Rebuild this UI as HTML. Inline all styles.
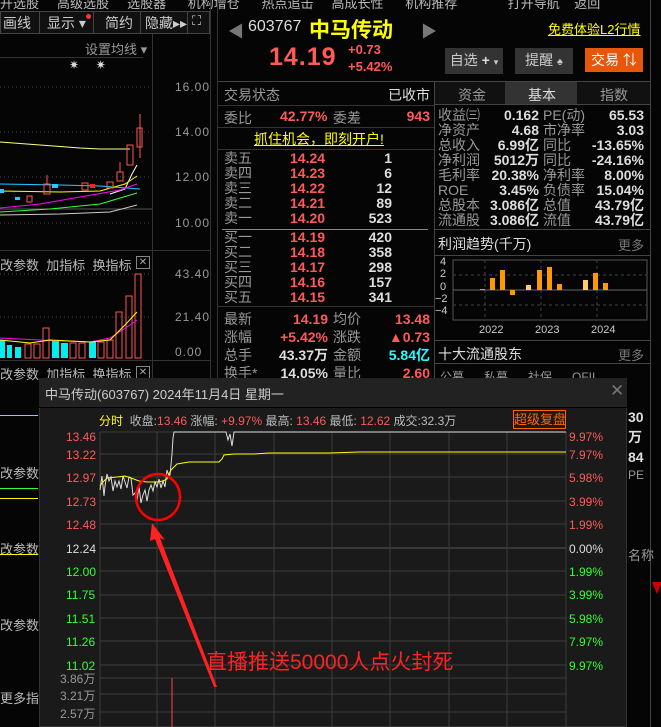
<!DOCTYPE html>
<html><head><meta charset="utf-8"><style>
*{margin:0;padding:0;box-sizing:border-box}
body{width:661px;height:727px;background:#050505;overflow:hidden;position:relative;font-family:"Liberation Sans","Noto Sans CJK SC",sans-serif;font-size:13px;color:#ccc}
.a{position:absolute;white-space:nowrap}
.r{color:#ff5a5a}.g{color:#3f3}.w{color:#ddd}.gy{color:#999}.y{color:#ff0}.c{color:#2ff}
.m{font-family:"Liberation Sans","Noto Sans CJK SC",sans-serif}
.hl{position:absolute;height:1px;background:#333}
.vl{position:absolute;width:1px;background:#333}
.btn{position:absolute;background:#333;color:#ccc;font-size:14px;text-align:center;line-height:24px}
</style></head><body>
<div class="a gy" style="left:0;top:-7px;font-size:13px;color:#bbb">开选股 &nbsp;&nbsp;&nbsp;&nbsp;高级选股 &nbsp;&nbsp;&nbsp;&nbsp;选股器 &nbsp;&nbsp;&nbsp;&nbsp;&nbsp;机构增仓 &nbsp;&nbsp;&nbsp;&nbsp;&nbsp;热点追击 &nbsp;&nbsp;&nbsp;&nbsp;高成长性 &nbsp;&nbsp;&nbsp;&nbsp;&nbsp;机构推荐 &nbsp;&nbsp;&nbsp;&nbsp;&nbsp;&nbsp;&nbsp;&nbsp;&nbsp;&nbsp;&nbsp;&nbsp;&nbsp;打开导航 &nbsp;&nbsp;&nbsp;返回</div>
<div class="a" style="left:0;top:11px;width:210px;height:23px;border:1px solid #444;background:#111"></div>
<div class="a" style="left:3px;top:13px;font-size:14px;color:#ccc">画线</div>
<div class="vl" style="left:39px;top:11px;height:23px;background:#444"></div>
<div class="a" style="left:47px;top:13px;font-size:14px">显示 ▾</div><div class="a" style="left:86px;top:14px;width:5px;height:5px;border-radius:3px;background:#f33"></div>
<div class="vl" style="left:93px;top:11px;height:23px;background:#444"></div>
<div class="a" style="left:105px;top:13px;font-size:14px">简约</div>
<div class="vl" style="left:140px;top:11px;height:23px;background:#444"></div>
<div class="a" style="left:145px;top:13px;font-size:14px">隐藏▸▸</div>
<div class="vl" style="left:187px;top:11px;height:23px;background:#444"></div>
<div class="a" style="left:192px;top:13px;font-size:13px">⛶</div>
<div class="vl" style="left:152px;top:34px;height:360px;background:#333"></div>
<div class="vl" style="left:210px;top:0;height:380px;background:#333"></div>
<div class="vl" style="left:217px;top:0;height:380px;background:#333"></div>
<div class="a gy" style="left:85px;top:39px;font-size:13px">设置均线 ▾</div>
<div class="hl" style="left:0;top:57px;width:143px"></div>
<div class="a w" style="left:69px;top:58px;font-size:12px">✷ &nbsp;&nbsp;&nbsp;&nbsp;✷</div>
<div class="a gy" style="left:175px;top:80px;font-size:12px;letter-spacing:1px">16.00</div>
<div class="a gy" style="left:175px;top:125px;font-size:12px;letter-spacing:1px">14.00</div>
<div class="a gy" style="left:175px;top:170px;font-size:12px;letter-spacing:1px">12.00</div>
<div class="a gy" style="left:175px;top:216px;font-size:12px;letter-spacing:1px">10.00</div>
<svg class="a" style="left:0;top:34px" width="152" height="220">
<g stroke="#444" stroke-dasharray="1,3"><line x1="0" y1="53" x2="150" y2="53"/><line x1="0" y1="98" x2="150" y2="98"/><line x1="0" y1="143" x2="150" y2="143"/><line x1="0" y1="189" x2="150" y2="189"/></g>
<line x1="0" y1="175" x2="152" y2="175" stroke="#555"/>
<polyline fill="none" stroke="#ff8" stroke-width="1" points="0,108 40,111 80,114 100,115 130,115"/>
<polyline fill="none" stroke="#2cf" points="0,150 60,151 100,152 140,155"/>
<polyline fill="none" stroke="#fff" points="110,160 125,155 132,140 137,131"/>
<polyline fill="none" stroke="#ff0" points="0,157 60,158 100,157 125,150 137,142"/>
<polyline fill="none" stroke="#f0f" points="0,174 40,170 80,163 120,156 137,150"/>
<polyline fill="none" stroke="#3f3" points="0,178 50,175 100,170 137,159"/>
<polyline fill="none" stroke="#ccc" points="0,181 60,180 110,178 137,171"/>
<g fill="none" stroke="#f55"><rect x="27" y="162" width="5" height="6"/><rect x="44" y="150" width="6" height="10"/><rect x="82" y="149" width="6" height="7"/><rect x="107" y="148" width="6" height="6"/><rect x="117" y="138" width="6" height="9"/><rect x="127" y="111" width="6" height="20"/><rect x="137" y="94" width="5" height="19"/><line x1="140" y1="80" x2="140" y2="124"/><line x1="120" y1="128" x2="120" y2="138"/><line x1="47" y1="141" x2="47" y2="150"/></g>
<rect x="90" y="150" width="5" height="4" fill="#f22"/>
<g fill="#2cf"><rect x="0" y="155" width="4" height="4"/><rect x="15" y="163" width="5" height="3"/><rect x="52" y="150" width="6" height="4"/></g>
</svg>
<div class="hl" style="left:0;top:250px;width:210px"></div>
<div class="a" style="left:0;top:255px;font-size:13px;color:#bbb">改参数 &nbsp;加指标 &nbsp;换指标</div>
<div class="a" style="left:136px;top:256px;width:14px;height:13px;border:1px solid #888;color:#aaa;font-size:10px;line-height:11px;text-align:center">✕</div>
<div class="a gy" style="left:175px;top:267px;font-size:12px;letter-spacing:1px">43.40</div>
<div class="a gy" style="left:175px;top:310px;font-size:12px;letter-spacing:1px">21.40</div>
<div class="a gy" style="left:175px;top:345px;font-size:12px;letter-spacing:1px">0.00</div>
<svg class="a" style="left:0;top:270px" width="152" height="92">
<g stroke="#444" stroke-dasharray="1,3"><line x1="0" y1="4" x2="150" y2="4"/><line x1="0" y1="47" x2="150" y2="47"/></g>
<g fill="#0ee"><rect x="0" y="70" width="5" height="18"/><rect x="7" y="75" width="5" height="13"/><rect x="15" y="77" width="6" height="11"/><rect x="52" y="70" width="7" height="18"/><rect x="61" y="73" width="7" height="15"/><rect x="89" y="72" width="7" height="16"/></g>
<g fill="none" stroke="#f55"><rect x="25" y="74" width="6" height="14"/><rect x="34" y="74" width="6" height="14"/><rect x="43" y="58" width="6" height="30"/><rect x="70" y="73" width="6" height="15"/><rect x="79" y="73" width="6" height="15"/><rect x="98" y="72" width="6" height="16"/><rect x="107" y="70" width="6" height="18"/><rect x="116" y="42" width="6" height="46"/><rect x="126" y="26" width="6" height="62"/><rect x="135" y="4" width="6" height="84"/></g>
<polyline fill="none" stroke="#f0f" points="0,68 40,70 90,72 110,68 130,55 137,50"/>
<polyline fill="none" stroke="#ff0" points="0,70 30,73 50,70 90,72 110,70 125,55 137,42"/>
</svg>
<div class="hl" style="left:0;top:360px;width:210px"></div>
<div class="a" style="left:0;top:364px;font-size:13px;color:#bbb">改参数 &nbsp;加指标 &nbsp;换指标</div>
<div class="a" style="left:136px;top:366px;width:14px;height:13px;border:1px solid #888;color:#aaa;font-size:10px;line-height:11px;text-align:center">✕</div>

<div class="a" style="left:228px;top:18px;color:#777;font-size:16px">◀</div>
<div class="a" style="left:248px;top:18px;font-size:16px;color:#ddd">603767</div>
<div class="a y" style="left:309px;top:14px;font-size:21px;font-weight:bold">中马传动</div>
<div class="a" style="left:421px;top:18px;color:#777;font-size:16px">▶</div>
<div class="a y" style="left:548px;top:19px;font-size:13px;text-decoration:underline">免费体验L2行情</div>
<div class="a r" style="left:269px;top:43px;font-size:25px;font-weight:bold;letter-spacing:1px">14.19</div>
<div class="a r" style="left:348px;top:42px;font-size:13px;font-weight:bold">+0.73</div>
<div class="a r" style="left:348px;top:59px;font-size:13px;font-weight:bold">+5.42%</div>
<div class="btn" style="left:445px;top:48px;width:58px">自选 <b style="color:#ddd">+</b> <span style="font-size:9px">▾</span></div>
<div class="btn" style="left:515px;top:48px;width:58px">提醒 <span style="font-size:11px">♠</span></div>
<div class="btn" style="left:585px;top:48px;width:58px;background:#e8560a;color:#fff">交易 ⇅</div>
<div class="hl" style="left:218px;top:81px;width:432px;background:#444"></div>
<div class="vl" style="left:434px;top:81px;height:300px;background:#444"></div>
<div class="vl" style="left:650px;top:0;height:727px;background:#444"></div>
<div class="a" style="left:218px;top:82px;width:216px;height:300px">
<div class="a gy" style="left:6px;top:3px;font-size:14px">交易状态</div><div class="a w" style="right:4px;top:3px;font-size:14px">已收市</div>
<div class="hl" style="left:0;top:23px;width:216px"></div>
<div class="a gy" style="left:6px;top:26px;font-size:14px">委比</div><div class="a r" style="left:62px;top:26px;font-size:14px;font-weight:bold">42.77%</div><div class="a gy" style="left:115px;top:26px;font-size:14px">委差</div><div class="a r" style="right:4px;top:26px;font-size:14px;font-weight:bold">943</div>
<div class="hl" style="left:0;top:45px;width:216px"></div>
<div class="a y" style="left:36px;top:47px;font-size:14px;text-decoration:underline">抓住机会，即刻开户!</div>
<div class="hl" style="left:0;top:67px;width:216px"></div>
<div class="a gy" style="left:6px;top:69px;font-size:14px;line-height:15px">卖五<br>卖四<br>卖三<br>卖二<br>卖一</div>
<div class="a r" style="left:72px;top:69px;font-size:14px;line-height:15px;font-weight:bold">14.24<br>14.23<br>14.22<br>14.21<br>14.20</div>
<div class="a w" style="left:120px;width:54px;text-align:right;top:69px;font-size:14px;line-height:15px;font-weight:bold">1<br>6<br>12<br>89<br>523</div>
<div class="hl" style="left:4px;top:147px;width:206px;background:#888"></div>
<div class="a gy" style="left:6px;top:148px;font-size:14px;line-height:15px">买一<br>买二<br>买三<br>买四<br>买五</div>
<div class="a r" style="left:72px;top:148px;font-size:14px;line-height:15px;font-weight:bold">14.19<br>14.18<br>14.17<br>14.16<br>14.15</div>
<div class="a w" style="left:120px;width:54px;text-align:right;top:148px;font-size:14px;line-height:15px;font-weight:bold">420<br>358<br>298<br>157<br>341</div>
<div class="hl" style="left:0;top:224px;width:216px"></div>
<div class="a gy" style="left:6px;top:228px;font-size:14px;line-height:18px">最新<br>涨幅<br>总手<br>换手*</div>
<div class="a" style="left:50px;width:60px;text-align:right;top:228px;font-size:14px;line-height:18px;font-weight:bold"><span class="r">14.19</span><br><span class="r">+5.42%</span><br><span class="w">43.37万</span><br><span class="w">14.05%</span></div>
<div class="a gy" style="left:115px;top:228px;font-size:14px;line-height:18px">均价<br>涨跌<br>金额<br>量比</div>
<div class="a" style="right:4px;text-align:right;top:228px;font-size:14px;line-height:18px;font-weight:bold"><span class="r">13.48</span><br><span class="r">▲0.73</span><br><span class="c">5.84亿</span><br><span class="r">2.60</span></div>
</div>
<div class="a" style="left:435px;top:82px;width:215px;height:22px;background:#111"></div>
<div class="a" style="left:505px;top:82px;width:72px;height:22px;background:#333"></div>
<div class="a gy" style="left:458px;top:85px;font-size:14px">资金</div>
<div class="a w" style="left:528px;top:85px;font-size:14px">基本</div>
<div class="a gy" style="left:600px;top:85px;font-size:14px">指数</div>
<div class="hl" style="left:435px;top:104px;width:215px;background:#444"></div>
<div class="a gy" style="left:438px;top:108px;font-size:14px;line-height:15px">收益㈢<br>净资产<br>总收入<br>净利润<br>毛利率<br>ROE<br>总股本<br>流通股</div>
<div class="a w" style="left:470px;width:69px;text-align:right;top:108px;font-size:14px;line-height:15px;font-weight:bold">0.162<br>4.68<br>6.99亿<br>5012万<br>20.38%<br>3.45%<br>3.086亿<br>3.086亿</div>
<div class="a gy" style="left:543px;top:108px;font-size:14px;line-height:15px">PE(动)<br>市净率<br>同比<br>同比<br>净利率<br>负债率<br>总值<br>流值</div>
<div class="a w" style="right:17px;text-align:right;top:108px;font-size:14px;line-height:15px;font-weight:bold">65.53<br>3.03<br>-13.65%<br>-24.16%<br>8.00%<br>15.04%<br>43.79亿<br>43.79亿</div>
<div class="hl" style="left:435px;top:229px;width:215px;background:#444"></div>
<div class="a w" style="left:438px;top:234px;font-size:14px">利润趋势(千万)</div><div class="a" style="left:618px;top:235px;color:#777;font-size:13px">更多</div>
<div class="hl" style="left:435px;top:255px;width:215px;background:#444"></div>
<svg class="a" style="left:435px;top:256px" width="215" height="84">
<rect x="18" y="4" width="194" height="60" fill="none" stroke="#555"/>
<g stroke="#444" stroke-dasharray="3,3"><line x1="18" y1="19" x2="212" y2="19"/><line x1="18" y1="49" x2="212" y2="49"/><line x1="50" y1="4" x2="50" y2="64"/><line x1="106" y1="4" x2="106" y2="64"/><line x1="162" y1="4" x2="162" y2="64"/></g>
<line x1="18" y1="34" x2="212" y2="34" stroke="#666"/>
<g fill="#f90"><rect x="45" y="33" width="5" height="1"/><rect x="55" y="22" width="5" height="12"/><rect x="65" y="14" width="5" height="20"/><rect x="75" y="34" width="5" height="5"/><rect x="102" y="14" width="5" height="20"/><rect x="112" y="11" width="5" height="23"/><rect x="122" y="28" width="5" height="6"/><rect x="158" y="17" width="5" height="17"/><rect x="168" y="27" width="5" height="7"/></g>
<g fill="#fc6"><rect x="91" y="29" width="5" height="5"/><rect x="148" y="24" width="5" height="10"/></g>
<g fill="#ccc" font-size="11" font-family="Liberation Sans"><text x="5" y="9">4</text><text x="5" y="21">2</text><text x="5" y="34">0</text><text x="0" y="46">−2</text><text x="0" y="58">−4</text><text x="44" y="77">2022</text><text x="100" y="77">2023</text><text x="156" y="77">2024</text></g>
</svg>
<div class="hl" style="left:435px;top:340px;width:215px;background:#444"></div>
<div class="a w" style="left:438px;top:344px;font-size:14px">十大流通股东</div><div class="a" style="left:618px;top:345px;color:#777;font-size:13px">更多</div>
<div class="hl" style="left:435px;top:363px;width:215px;background:#444"></div>
<div class="a gy" style="left:440px;top:368px;font-size:12px">公募 &nbsp;&nbsp;&nbsp;&nbsp;&nbsp;私募 &nbsp;&nbsp;&nbsp;&nbsp;&nbsp;社保 &nbsp;&nbsp;&nbsp;&nbsp;&nbsp;QFII</div>
<div class="a w" style="left:628px;top:407px;font-size:14px;font-weight:bold;line-height:20px">30<br>万<br>84</div>
<div class="a gy" style="left:628px;top:468px;font-size:12px">PE</div>
<div class="a gy" style="left:628px;top:545px;font-size:13px">名称</div>
<div class="a" style="left:652px;top:582px;width:0;height:0;border-left:5px solid transparent;border-right:5px solid transparent;border-top:12px solid #c00"></div>
<div class="a" style="left:0;top:436px;font-size:13px;color:#bbb;line-height:76px">改参数<br>改参数<br>改参数</div>
<div class="a" style="left:0;top:688px;font-size:13px;color:#bbb">更多指标</div>
<div class="hl" style="left:0;top:415px;width:38px;background:#2ff"></div>
<div class="hl" style="left:0;top:488px;width:38px;background:#3f3"></div>
<div class="hl" style="left:0;top:498px;width:38px;background:#ff0"></div>
<div class="hl" style="left:0;top:554px;width:38px;background:#ff0"></div>
<div class="a" style="left:39px;top:378px;width:588px;height:349px;background:#1a1a1a;border:1px solid #333"></div>
<div class="a" style="left:39px;top:378px;width:588px;height:29px;background:#222"></div>
<div class="a" style="left:45px;top:384px;font-size:13px;color:#ccc">中马传动(603767) 2024年11月4日 星期一</div>
<div class="a" style="left:610px;top:381px;font-size:17px;color:#777">✕</div>
<div class="hl" style="left:39px;top:407px;width:588px;background:#000"></div>
<div class="a" style="left:99px;top:412px;font-size:12px;color:#bbb"><span class="y">分时</span> &nbsp;收盘:<span class="r">13.46</span> 涨幅: <span class="r">+9.97%</span> 最高: <span class="r">13.46</span> 最低: <span class="r">12.62</span> 成交:32.3万</div>
<div class="a" style="left:513px;top:410px;width:53px;height:19px;border:1px solid #f60;color:#f60;font-size:13px;line-height:17px;text-align:center">超级复盘</div>
<svg class="a" style="left:39px;top:378px" width="588" height="349">
<g stroke="#3c3c3c"><line x1="61" y1="54" x2="527" y2="54"/><line x1="61" y1="76" x2="527" y2="76"/><line x1="61" y1="99" x2="527" y2="99"/><line x1="61" y1="123" x2="527" y2="123"/><line x1="61" y1="146" x2="527" y2="146"/><line x1="61" y1="170" x2="527" y2="170" stroke="#555"/><line x1="61" y1="193" x2="527" y2="193"/><line x1="61" y1="217" x2="527" y2="217"/><line x1="61" y1="240" x2="527" y2="240"/><line x1="61" y1="263" x2="527" y2="263"/><line x1="61" y1="287" x2="527" y2="287"/><line x1="61" y1="300" x2="527" y2="300"/><line x1="61" y1="316" x2="527" y2="316"/><line x1="61" y1="334" x2="527" y2="334"/>
<line x1="61" y1="54" x2="61" y2="349"/><line x1="118" y1="54" x2="118" y2="349"/><line x1="176" y1="54" x2="176" y2="349"/><line x1="235" y1="54" x2="235" y2="349"/><line x1="293" y1="54" x2="293" y2="349"/><line x1="351" y1="54" x2="351" y2="349"/><line x1="410" y1="54" x2="410" y2="349"/><line x1="468" y1="54" x2="468" y2="349"/><line x1="527" y1="54" x2="527" y2="349"/></g>
<polyline fill="none" stroke="#ddd" points="61,112 63,98 65,118 66,108 68,96 70,103 72,99 74,113 76,103 78,109 80,103 82,111 84,98 86,104 88,110 90,99 92,100 94,117 96,115 98,123 100,108 102,125 104,117 106,112 108,123 110,112 112,107 114,113 116,104 118,109 120,101 122,110 124,103 126,109 128,92 130,98 131,97 133,76 134,60 135,54 187,54 189,62 191,56 193,68 195,54 527,54"/>
<polyline fill="none" stroke="#ff0" points="61,108 64,104 68,100 78,99 86,98 92,100 100,103 108,104 118,104 124,103 128,101 130,96 132,92 135,89 138,86 150,84 170,84 180,84 183,81 185,77 195,76 215,76 230,75 290,75 320,74 527,74"/>
<line x1="133" y1="300" x2="133" y2="349" stroke="#f44"/>
<ellipse cx="119" cy="119" rx="22" ry="23" fill="none" stroke="#f00" stroke-width="2.5"/>
<polygon points="113,145 126,162 121,160 178,309 175,309 116,161 111,163" fill="#f22"/>
</svg>
<div class="a" style="left:66px;top:429px;font-size:12px;line-height:0">
<div class="a r" style="top:8px">13.46</div><div class="a r" style="top:26px">13.22</div><div class="a r" style="top:49px">12.97</div><div class="a r" style="top:73px">12.73</div><div class="a r" style="top:96px">12.48</div><div class="a w" style="top:120px">12.24</div><div class="a g" style="top:143px">12.00</div><div class="a g" style="top:166px">11.75</div><div class="a g" style="top:190px">11.51</div><div class="a g" style="top:213px">11.26</div><div class="a g" style="top:237px">11.02</div>
<div class="a gy" style="top:250px;left:-6px">3.86万</div><div class="a gy" style="top:267px;left:-6px">3.21万</div><div class="a gy" style="top:285px;left:-6px">2.57万</div></div>
<div class="a" style="left:569px;top:429px;font-size:12px;line-height:0">
<div class="a r" style="top:8px">9.97%</div><div class="a r" style="top:26px">7.97%</div><div class="a r" style="top:49px">5.98%</div><div class="a r" style="top:73px">3.99%</div><div class="a r" style="top:96px">1.99%</div><div class="a w" style="top:120px">0.00%</div><div class="a g" style="top:143px">1.99%</div><div class="a g" style="top:166px">3.99%</div><div class="a g" style="top:190px">5.98%</div><div class="a g" style="top:213px">7.97%</div><div class="a g" style="top:237px">9.97%</div></div>
<div class="a" style="left:206px;top:646px;font-size:21px;color:#f22">直播推送50000人点火封死</div>
</body></html>
